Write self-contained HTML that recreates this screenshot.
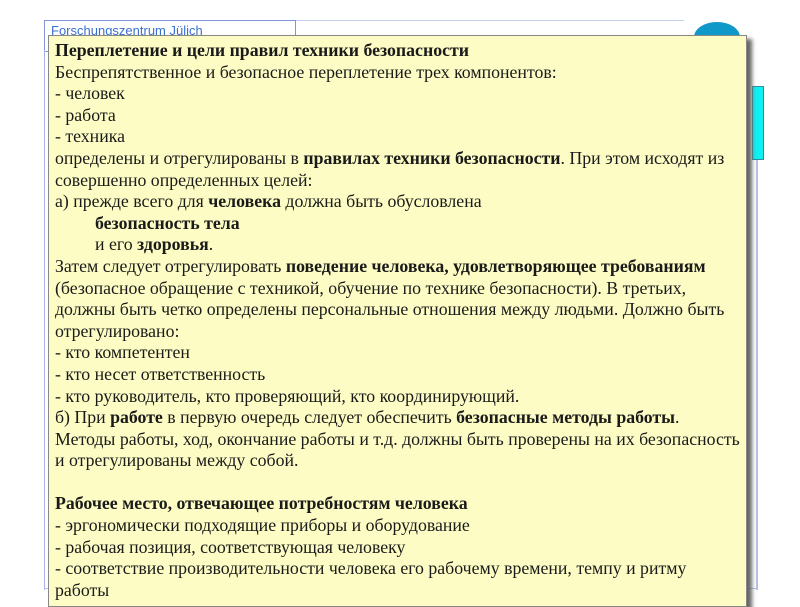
<!DOCTYPE html>
<html><head><meta charset="utf-8"><style>
body{margin:0;width:800px;height:600px;background:#fff;position:relative;overflow:hidden;font-family:"Liberation Serif","Noto Serif CJK SC",serif;}
.hdr{position:absolute;left:44px;top:20px;width:250px;height:30px;border:1px solid #7f95e0;}
.hdr span{position:absolute;left:6px;top:2px;font:13px "Liberation Sans",sans-serif;color:#3a6fd0;}
.topline{position:absolute;left:294px;top:20px;width:390px;height:1px;background:#c8d0f0;}
.leftline{position:absolute;left:44px;top:50px;width:1px;height:540px;background:#a8b4e8;}
.rightline{position:absolute;left:756px;top:140px;width:2px;height:450px;background:#b8c0e8;}
.botline{position:absolute;left:44px;top:588px;width:714px;height:1px;background:#b8c0e8;}
.blob{position:absolute;left:694px;top:22px;width:46px;height:30px;background:#1099c8;border-radius:60% 60% 0 0;}
.cyan{position:absolute;left:752px;top:86px;width:10px;height:72px;background:#10f0f0;border:1px solid #3090a0;}
.box{position:absolute;left:48px;top:35px;width:697px;height:570px;background:#fcfcc4;border:1px solid #888;box-shadow:5px 4px 4px #666;}
.txt{position:absolute;left:55px;top:40px;width:700px;font-size:17.8px;line-height:21.6px;color:#1a1a1a;white-space:nowrap;}
b{font-weight:bold}
.ind{padding-left:40px}
</style></head><body>
<div class="topline"></div>
<div class="hdr"><span>Forschungszentrum Jülich</span></div>
<div class="blob"></div>
<div class="leftline"></div>
<div class="rightline"></div>
<div class="botline"></div>
<div class="cyan"></div>
<div class="box"></div>
<div class="txt">
<b>Переплетение и цели правил техники безопасности</b><br>
Беспрепятственное и безопасное переплетение трех компонентов:<br>
- человек<br>
- работа<br>
- техника<br>
определены и отрегулированы в <b>правилах техники безопасности</b>. При этом исходят из<br>
совершенно определенных целей:<br>
а) прежде всего для <b>человека</b> должна быть обусловлена<br>
<div class="ind"><b>безопасность тела</b></div>
<div class="ind">и его <b>здоровья</b>.</div>
Затем следует отрегулировать <b>поведение человека, удовлетворяющее требованиям</b><br>
(безопасное обращение с техникой, обучение по технике безопасности). В третьих,<br>
должны быть четко определены персональные отношения между людьми. Должно быть<br>
отрегулировано:<br>
- кто компетентен<br>
- кто несет ответственность<br>
- кто руководитель, кто проверяющий, кто координирующий.<br>
б) При <b>работе</b> в первую очередь следует обеспечить <b>безопасные методы работы</b>.<br>
Методы работы, ход, окончание работы и т.д. должны быть проверены на их безопасность<br>
и отрегулированы между собой.<br>
<br>
<b>Рабочее место, отвечающее потребностям человека</b><br>
- эргономически подходящие приборы и оборудование<br>
- рабочая позиция, соответствующая человеку<br>
- соответствие производительности человека его рабочему времени, темпу и ритму<br>
работы
</div>
</body></html>
